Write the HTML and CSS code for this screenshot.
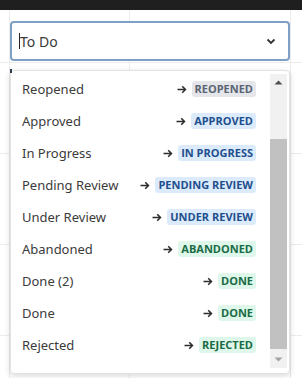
FILE: index.html
```html
<!DOCTYPE html>
<html>
  <head>
    <title>Status Select</title>
    <link rel="stylesheet" href="styles.css">
  </head>

  <body>
    <div class="topbar"></div>

    <div class="board">
      <div class="select">
        <span class="caret"></span>
        <span class="select-value">To Do</span>
        <svg class="chevron" width="10" height="7" viewBox="0 0 10 7">
          <path d="M1.5 1.5 L5 5 L8.5 1.5" fill="none" stroke="#333" stroke-width="1.8" />
        </svg>
      </div>

      <span class="marker"></span>

      <div class="menu">
        <ul class="options">
          <li class="option"><span>Reopened</span><span class="target"><svg class="arrow" width="10" height="9" viewBox="0 0 10 9"><path d="M0.5 4.5 H8.5 M5.2 1.2 L8.5 4.5 L5.2 7.8" fill="none" stroke="#2d2d2d" stroke-width="1.5" /></svg><span class="badge gray">REOPENED</span></span></li>
          <li class="option"><span>Approved</span><span class="target"><svg class="arrow" width="10" height="9" viewBox="0 0 10 9"><path d="M0.5 4.5 H8.5 M5.2 1.2 L8.5 4.5 L5.2 7.8" fill="none" stroke="#2d2d2d" stroke-width="1.5" /></svg><span class="badge blue">APPROVED</span></span></li>
          <li class="option"><span>In Progress</span><span class="target"><svg class="arrow" width="10" height="9" viewBox="0 0 10 9"><path d="M0.5 4.5 H8.5 M5.2 1.2 L8.5 4.5 L5.2 7.8" fill="none" stroke="#2d2d2d" stroke-width="1.5" /></svg><span class="badge blue">IN PROGRESS</span></span></li>
          <li class="option"><span>Pending Review</span><span class="target"><svg class="arrow" width="10" height="9" viewBox="0 0 10 9"><path d="M0.5 4.5 H8.5 M5.2 1.2 L8.5 4.5 L5.2 7.8" fill="none" stroke="#2d2d2d" stroke-width="1.5" /></svg><span class="badge blue">PENDING REVIEW</span></span></li>
          <li class="option"><span>Under Review</span><span class="target"><svg class="arrow" width="10" height="9" viewBox="0 0 10 9"><path d="M0.5 4.5 H8.5 M5.2 1.2 L8.5 4.5 L5.2 7.8" fill="none" stroke="#2d2d2d" stroke-width="1.5" /></svg><span class="badge blue">UNDER REVIEW</span></span></li>
          <li class="option"><span>Abandoned</span><span class="target"><svg class="arrow" width="10" height="9" viewBox="0 0 10 9"><path d="M0.5 4.5 H8.5 M5.2 1.2 L8.5 4.5 L5.2 7.8" fill="none" stroke="#2d2d2d" stroke-width="1.5" /></svg><span class="badge green">ABANDONED</span></span></li>
          <li class="option"><span>Done (2)</span><span class="target"><svg class="arrow" width="10" height="9" viewBox="0 0 10 9"><path d="M0.5 4.5 H8.5 M5.2 1.2 L8.5 4.5 L5.2 7.8" fill="none" stroke="#2d2d2d" stroke-width="1.5" /></svg><span class="badge green">DONE</span></span></li>
          <li class="option"><span>Done</span><span class="target"><svg class="arrow" width="10" height="9" viewBox="0 0 10 9"><path d="M0.5 4.5 H8.5 M5.2 1.2 L8.5 4.5 L5.2 7.8" fill="none" stroke="#2d2d2d" stroke-width="1.5" /></svg><span class="badge green">DONE</span></span></li>
          <li class="option"><span>Rejected</span><span class="target"><svg class="arrow" width="10" height="9" viewBox="0 0 10 9"><path d="M0.5 4.5 H8.5 M5.2 1.2 L8.5 4.5 L5.2 7.8" fill="none" stroke="#2d2d2d" stroke-width="1.5" /></svg><span class="badge green">REJECTED</span></span></li>
        </ul>

        <!-- fake scrollbar -->
        <div class="scrollbar">
          <svg class="scroll-btn" width="17" height="17" viewBox="0 0 17 17"><path d="M4.5 10.5 L8.5 6.5 L12.5 10.5 Z" fill="#505050" /></svg>
          <div class="scroll-track"><div class="scroll-thumb"></div></div>
          <svg class="scroll-btn" width="17" height="17" viewBox="0 0 17 17"><path d="M4.5 6.5 L8.5 10.5 L12.5 6.5 Z" fill="#a3a3a3" /></svg>
        </div>
      </div>
    </div>
  </body>
</html>
```

FILE: styles.css
```css
html,
body {
  margin: 0;
  height: 100%;
}

body {
  font-family: "Noto Sans", "Open Sans", sans-serif;
  background-color: #fff;
  overflow: hidden;
}

.topbar {
  height: 10px;
  background-color: #1f1f1f;
}

.board {
  position: relative;
  height: 368px;
  padding: 11px 12px 0 10px;
  box-sizing: border-box;
  background-image:
    linear-gradient(to right, transparent 9px, #ececec 9px, #ececec 10px, transparent 10px),
    linear-gradient(to right, transparent 129px, #ececec 129px, #ececec 130px, transparent 130px),
    linear-gradient(to right, transparent 290px, #ececec 290px, #ececec 291px, transparent 291px),
    repeating-linear-gradient(to bottom, transparent 0, transparent 52px, #ececec 52px, #ececec 53px, transparent 53px, transparent 91px);
}

.select {
  display: flex;
  align-items: center;
  height: 40px;
  width: 280px;
  box-sizing: border-box;
  padding: 0 12px 0 7px;
  border: 2px solid #7da0c4;
  border-radius: 4px;
  background-color: #fff;
}

.caret {
  width: 1px;
  height: 16px;
  background-color: #222;
}

.select-value {
  flex: 1;
  font-size: 14px;
  color: #3a3a3a;
}

.chevron {
  display: block;
}

.marker {
  position: absolute;
  left: 10px;
  top: 59px;
  width: 2px;
  height: 4px;
  background-color: #2c3e50;
}

.menu {
  display: flex;
  width: 280px;
  margin-top: 9px;
  padding: 2px 2px 5px 0;
  box-sizing: border-box;
  border: 1px solid #e2e2e2;
  border-radius: 4px;
  background-color: #fff;
  box-shadow: 0 2px 6px rgba(0, 0, 0, 0.15);
}

.options {
  flex: 1;
  list-style: none;
  margin: 0;
  padding: 0;
}

.option {
  display: flex;
  align-items: center;
  justify-content: space-between;
  height: 32px;
  padding: 0 14px 0 11px;
  font-size: 13px;
  color: #3b3b3b;
}

.target {
  display: flex;
  align-items: center;
  gap: 5px;
}

.arrow {
  display: block;
}

.badge {
  font-family: "Open Sans", "Noto Sans", sans-serif;
  font-size: 11px;
  font-weight: 700;
  line-height: 16px;
  padding: 0 3px;
  border-radius: 3px;
}

.gray {
  background-color: #e4e6ea;
  color: #5b6472;
}

.blue {
  background-color: #dcebfc;
  color: #1f4f8c;
}

.green {
  background-color: #def7ea;
  color: #1a6b45;
}

.scrollbar {
  display: flex;
  flex-direction: column;
  width: 17px;
  margin-top: 1px;
  background-color: #f1f1f1;
}

.scroll-btn {
  display: block;
}

.scroll-track {
  flex: 1;
  padding-top: 48px;
  padding-bottom: 2px;
}

.scroll-thumb {
  height: 210px;
  background-color: #c1c1c1;
}
```
